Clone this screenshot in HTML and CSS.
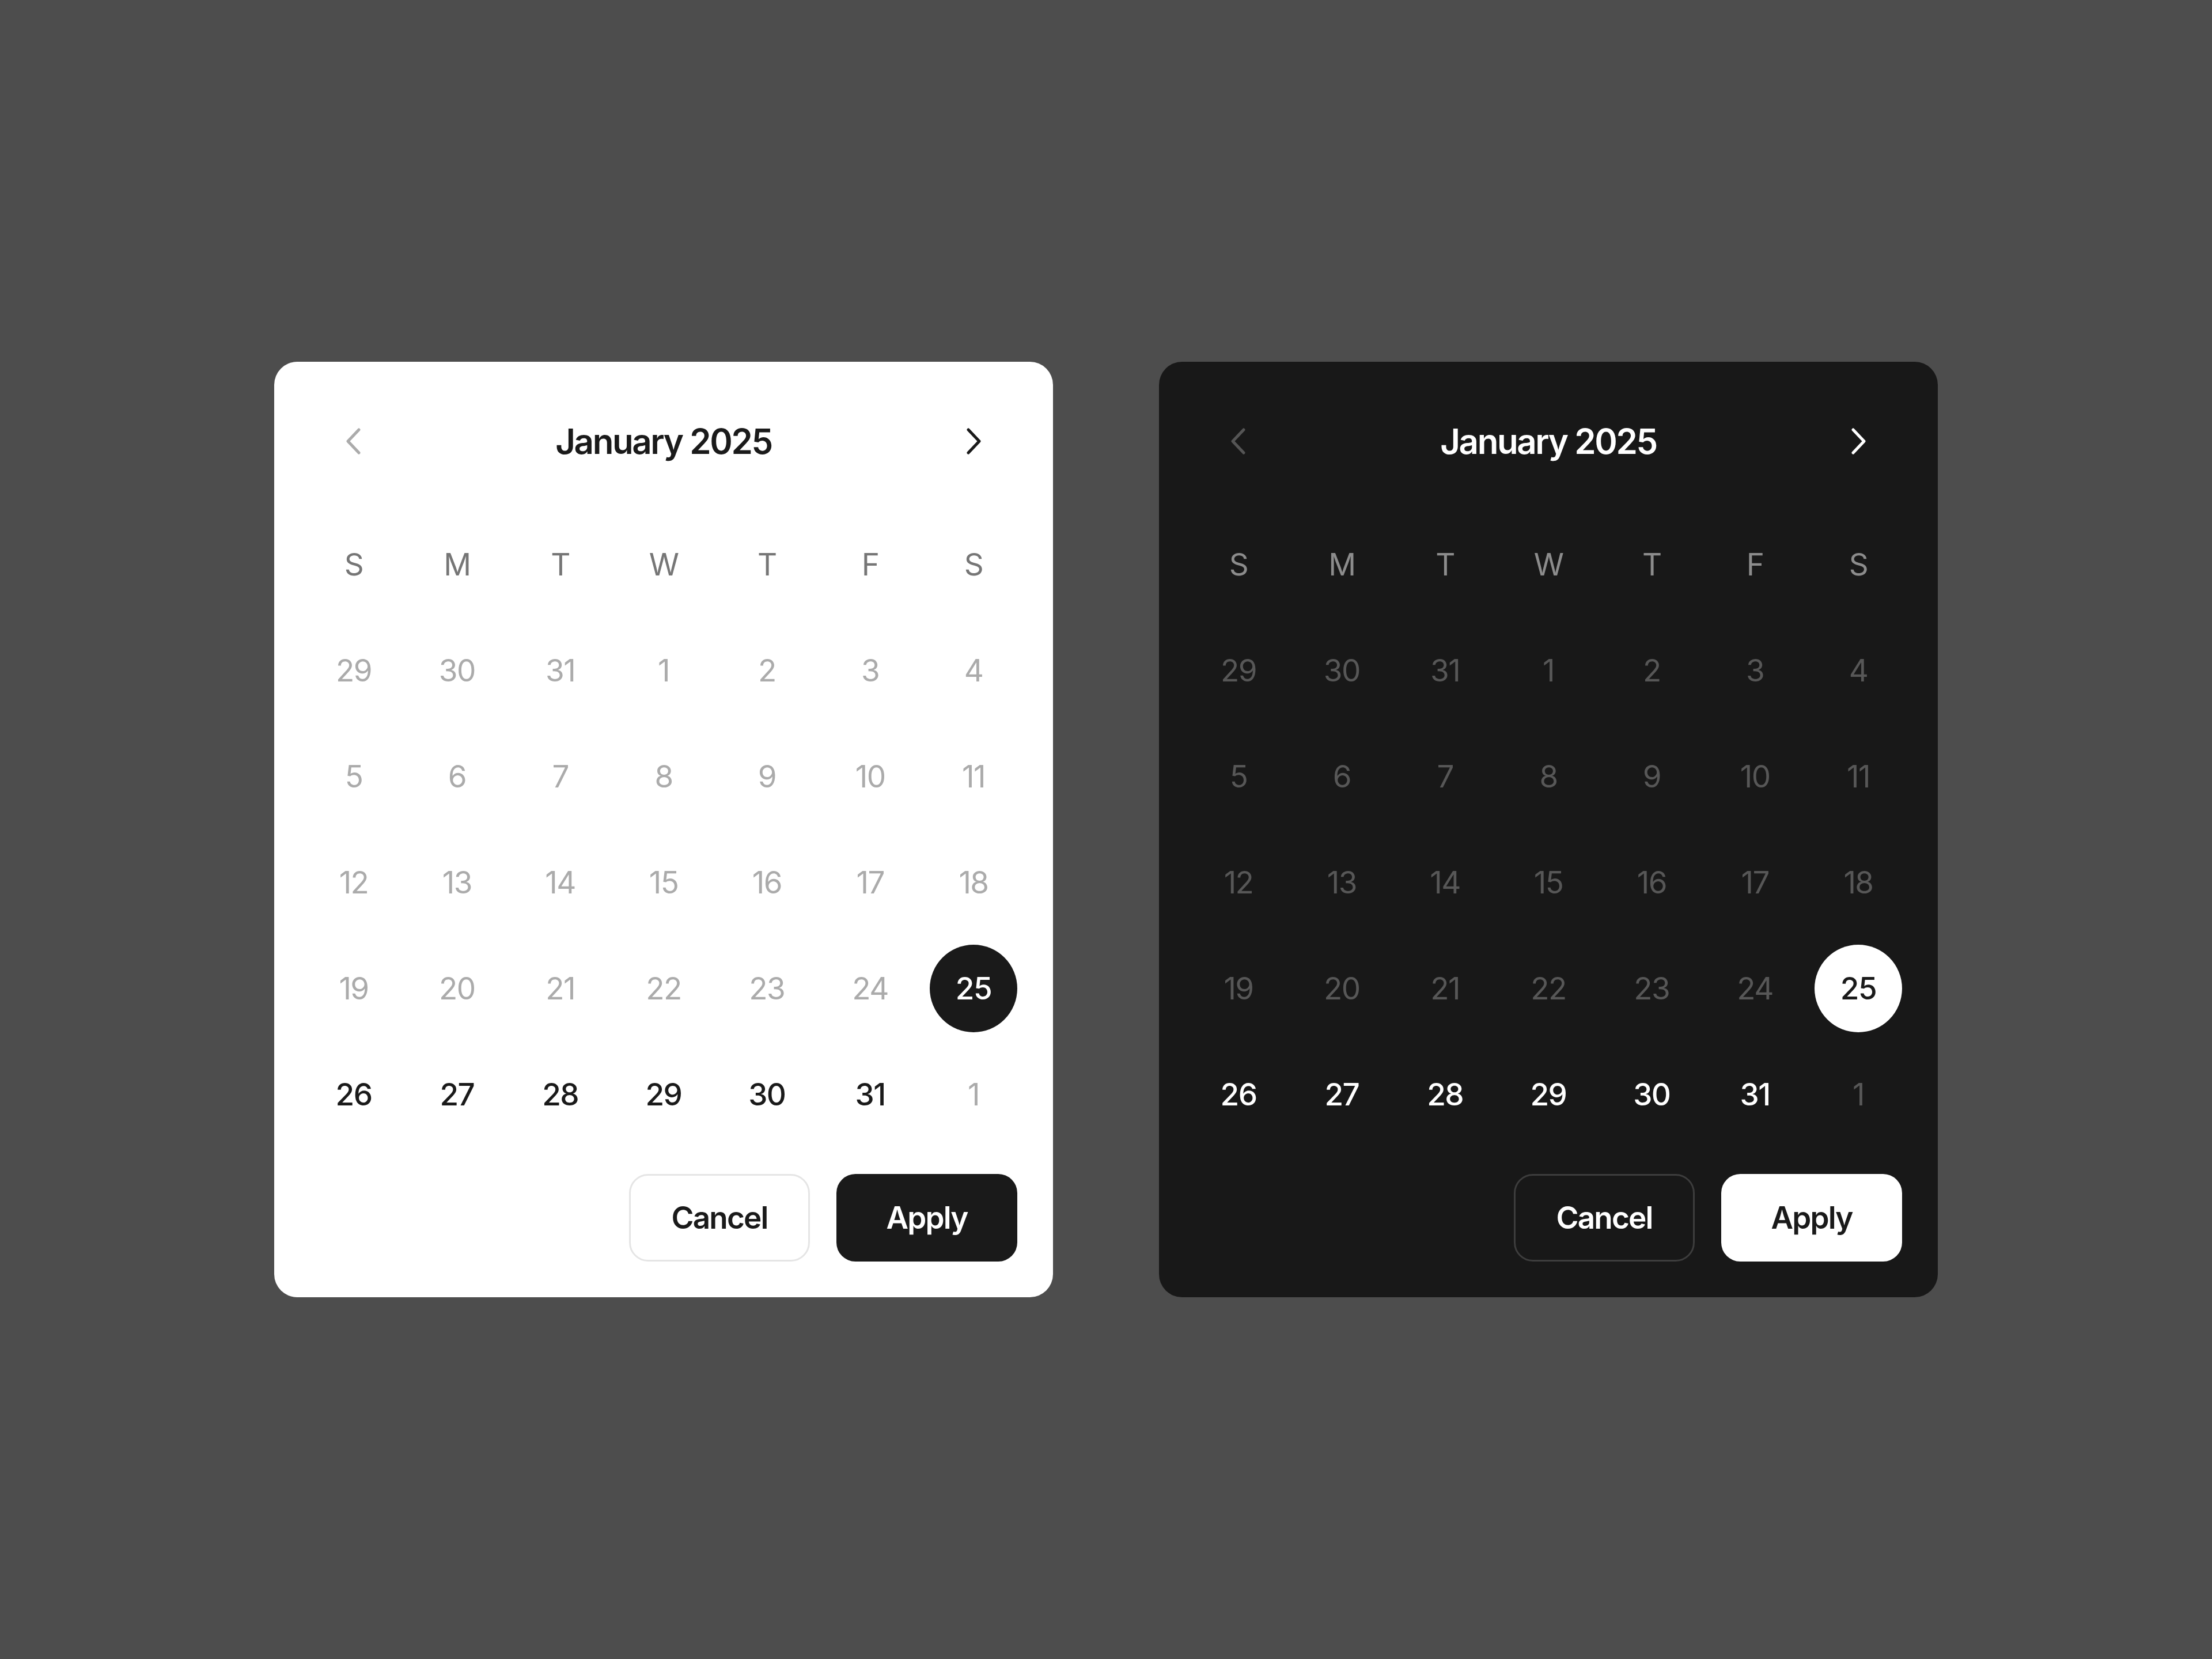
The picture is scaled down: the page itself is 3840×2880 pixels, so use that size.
FILE: index.html
```html
<!DOCTYPE html>
<html lang="en">
<head>
<meta charset="utf-8">
<title>Date picker</title>
<link rel="stylesheet" href="styles.css">
</head>
<body>
<main class="stage">

  <section class="picker picker--light">
    <header class="picker__head">
      <button class="nav nav--prev" aria-label="Previous month">
        <svg viewBox="0 0 28 48" width="28" height="48"><path d="M23 4 L4 24 L23 44"/></svg>
      </button>
      <h2 class="picker__title">January 2025</h2>
      <button class="nav nav--next" aria-label="Next month">
        <svg viewBox="0 0 28 48" width="28" height="48"><path d="M5 4 L24 24 L5 44"/></svg>
      </button>
    </header>
    <div class="grid">
      <span class="wd">S</span><span class="wd">M</span><span class="wd">T</span><span class="wd">W</span><span class="wd">T</span><span class="wd">F</span><span class="wd">S</span>
      <span class="day off">29</span><span class="day off">30</span><span class="day off">31</span><span class="day off">1</span><span class="day off">2</span><span class="day off">3</span><span class="day off">4</span>
      <span class="day off">5</span><span class="day off">6</span><span class="day off">7</span><span class="day off">8</span><span class="day off">9</span><span class="day off">10</span><span class="day off">11</span>
      <span class="day off">12</span><span class="day off">13</span><span class="day off">14</span><span class="day off">15</span><span class="day off">16</span><span class="day off">17</span><span class="day off">18</span>
      <span class="day off">19</span><span class="day off">20</span><span class="day off">21</span><span class="day off">22</span><span class="day off">23</span><span class="day off">24</span><span class="day sel">25</span>
      <span class="day">26</span><span class="day">27</span><span class="day">28</span><span class="day">29</span><span class="day">30</span><span class="day">31</span><span class="day off">1</span>
    </div>
    <footer class="picker__foot">
      <button class="btn btn--ghost">Cancel</button>
      <button class="btn btn--solid">Apply</button>
    </footer>
  </section>

  <section class="picker picker--dark">
    <header class="picker__head">
      <button class="nav nav--prev" aria-label="Previous month">
        <svg viewBox="0 0 28 48" width="28" height="48"><path d="M23 4 L4 24 L23 44"/></svg>
      </button>
      <h2 class="picker__title">January 2025</h2>
      <button class="nav nav--next" aria-label="Next month">
        <svg viewBox="0 0 28 48" width="28" height="48"><path d="M5 4 L24 24 L5 44"/></svg>
      </button>
    </header>
    <div class="grid">
      <span class="wd">S</span><span class="wd">M</span><span class="wd">T</span><span class="wd">W</span><span class="wd">T</span><span class="wd">F</span><span class="wd">S</span>
      <span class="day off">29</span><span class="day off">30</span><span class="day off">31</span><span class="day off">1</span><span class="day off">2</span><span class="day off">3</span><span class="day off">4</span>
      <span class="day off">5</span><span class="day off">6</span><span class="day off">7</span><span class="day off">8</span><span class="day off">9</span><span class="day off">10</span><span class="day off">11</span>
      <span class="day off">12</span><span class="day off">13</span><span class="day off">14</span><span class="day off">15</span><span class="day off">16</span><span class="day off">17</span><span class="day off">18</span>
      <span class="day off">19</span><span class="day off">20</span><span class="day off">21</span><span class="day off">22</span><span class="day off">23</span><span class="day off">24</span><span class="day sel">25</span>
      <span class="day">26</span><span class="day">27</span><span class="day">28</span><span class="day">29</span><span class="day">30</span><span class="day">31</span><span class="day off">1</span>
    </div>
    <footer class="picker__foot">
      <button class="btn btn--ghost">Cancel</button>
      <button class="btn btn--solid">Apply</button>
    </footer>
  </section>

</main>
</body>
</html>
```

FILE: styles.css
```css
* { box-sizing: border-box; }

html, body {
  margin: 0;
  padding: 0;
  background: #4d4d4d;
}

body {
  font-family: Inter, "Noto Sans", "Liberation Sans", sans-serif;
}

.stage {
  height: 2880px;
  display: flex;
  align-items: center;
  justify-content: center;
  gap: 184px;
}

/* card */
.picker {
  width: 1352px;
  padding: 62px;
  border-radius: 40px;
  display: flex;
  flex-direction: column;
  gap: 62px;
}

.picker--light { background: #ffffff; color: #1a1a1a; }
.picker--dark  { background: #181818; color: #ffffff; }

/* month header */
.picker__head {
  height: 152px;
  display: flex;
  align-items: center;
  justify-content: space-between;
}

.picker__title {
  margin: 0;
  font-size: 60px;
  font-weight: 600;
  letter-spacing: -0.04em;
}

.nav {
  width: 152px;
  height: 152px;
  padding: 0;
  border: 0;
  background: none;
  display: flex;
  align-items: center;
  justify-content: center;
}

.nav svg { display: block; }

.nav path {
  fill: none;
  stroke-width: 5;
  stroke-linecap: round;
  stroke-linejoin: round;
}

.picker--light .nav--prev path { stroke: #ababab; }
.picker--light .nav--next path { stroke: #1a1a1a; }
.picker--dark  .nav--prev path { stroke: #555555; }
.picker--dark  .nav--next path { stroke: #ffffff; }

/* calendar grid */
.grid {
  display: grid;
  grid-template-columns: repeat(7, 152px);
  grid-auto-rows: 152px;
  justify-content: space-between;
  row-gap: 32px;
}

.wd, .day {
  display: flex;
  align-items: center;
  justify-content: center;
  font-size: 53px;
  letter-spacing: -0.03em;
}

.wd { font-weight: 400; }
.day { font-weight: 500; }

.picker--light .wd { color: #767676; }
.picker--dark  .wd { color: #8c8c8c; }

.day.off { font-weight: 400; }
.picker--light .day.off { color: #ababab; }
.picker--dark  .day.off { color: #575757; }

.day.sel { border-radius: 50%; font-weight: 500; }
.picker--light .day.sel { background: #1a1a1a; color: #ffffff; }
.picker--dark  .day.sel { background: #ffffff; color: #1a1a1a; }

/* actions */
.picker__foot {
  display: flex;
  justify-content: flex-end;
  gap: 46px;
}

.btn {
  width: 314px;
  height: 152px;
  border-radius: 33px;
  font-family: inherit;
  font-size: 53px;
  font-weight: 600;
  letter-spacing: -0.035em;
  cursor: pointer;
}

.picker--light .btn--ghost { background: #ffffff; color: #1a1a1a; border: 3px solid #e5e5e5; }
.picker--light .btn--solid { background: #1a1a1a; color: #ffffff; border: 0; }
.picker--dark  .btn--ghost { background: #181818; color: #ffffff; border: 3px solid #3d3d3d; }
.picker--dark  .btn--solid { background: #ffffff; color: #1a1a1a; border: 0; }
```
